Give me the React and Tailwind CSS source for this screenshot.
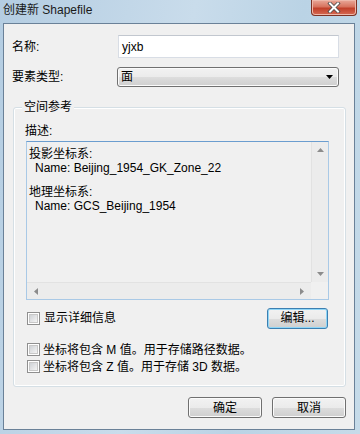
import React from 'react';

const FONT = '"Liberation Sans", "Noto Sans CJK SC", sans-serif';

function CheckBox() {
  return (
    <span className="w-[13px] h-[13px] border border-[#8f8f8f] bg-white p-[1px] flex shrink-0">
      <span className="flex-1 bg-gradient-to-br from-[#cfd2d6] to-[#f4f4f4] border border-[#c8c8c8]" />
    </span>
  );
}

function WinButton({ children, focused, className }) {
  return (
    <button
      className={
        'h-[21px] rounded-[3px] border text-[12px] text-black flex items-center justify-center bg-[linear-gradient(#f2f2f2_0%,#ebebeb_50%,#dddddd_51%,#cfcfcf_100%)] ' +
        (focused
          ? 'border-[#3c7fb1] shadow-[inset_0_0_0_1px_#8fd6f7] '
          : 'border-[#707070] shadow-[inset_0_0_0_1px_#fbfbfb] ') +
        (className || '')
      }
    >
      {children}
    </button>
  );
}

function Tri({ dir }) {
  const pts = {
    up: '0,4 7,4 3.5,0',
    down: '0,0 7,0 3.5,4',
    left: '4,0 4,7 0,3.5',
    right: '0,0 0,7 4,3.5',
  }[dir];
  const w = dir === 'up' || dir === 'down' ? 7 : 4;
  const h = dir === 'up' || dir === 'down' ? 4 : 7;
  return (
    <svg width={w} height={h} viewBox={`0 0 ${w} ${h}`}>
      <polygon points={pts} fill="#8c8c8c" />
    </svg>
  );
}

export default function App() {
  return (
    <div
      className="w-[360px] h-[434px] flex flex-col bg-[linear-gradient(100deg,#b4cde2_0%,#c9dceb_45%,#bad3e5_70%,#c6dbe9_100%)] overflow-hidden"
      style={{ fontFamily: FONT }}
    >
      {/* title bar */}
      <div className="h-[23px] flex items-start shrink-0">
        <span className="pl-[3px] pt-[2px] text-[12px] leading-[16px] text-[#1a1a1a]">创建新 Shapefile</span>
        <div className="ml-auto mr-[3px] w-[46px] h-[16px] rounded-b-[4px] border border-t-0 border-[#7d3224] bg-[linear-gradient(#e9a99a_0%,#d7735e_45%,#c1402a_55%,#d66a53_100%)] shadow-[inset_0_0_0_1px_#eeb8aa] flex items-center justify-center">
          <svg width="14" height="11" viewBox="0 0 14 11">
            <path d="M3 1.5 L11 9.5 M11 1.5 L3 9.5" stroke="#4a4a4a" strokeWidth="3.6" strokeLinecap="square" />
            <path d="M3 1.5 L11 9.5 M11 1.5 L3 9.5" stroke="#ffffff" strokeWidth="2" strokeLinecap="square" />
          </svg>
        </div>
      </div>

      {/* client area */}
      <div className="ml-[3px] mr-[5px] mb-[4px] flex-1 border border-[#6a8198] bg-[#f0f0f0] flex flex-col text-[12px] text-black">
        <div className="flex items-center mt-[11px]">
          <span className="w-[114px] pl-[8px]">名称:</span>
          <div className="w-[221px] h-[23px] bg-white border border-[#d8dde5] border-t-[#c2c7cf] flex items-center pl-[3px]">
            yjxb
          </div>
        </div>
        <div className="flex items-center mt-[9px]">
          <span className="w-[113px] pl-[8px]">要素类型:</span>
          <div className="w-[222px] h-[20px] rounded-[3px] border border-[#707070] bg-[linear-gradient(#f2f2f2_0%,#ebebeb_50%,#dddddd_51%,#cfcfcf_100%)] shadow-[inset_0_0_0_1px_#fbfbfb] flex items-center pl-[3px] pr-[5px]">
            <span>面</span>
            <svg className="ml-auto" width="7" height="4" viewBox="0 0 7 4">
              <polygon points="0,0 7,0 3.5,4" fill="#000" />
            </svg>
          </div>
        </div>

        {/* group box */}
        <div className="relative ml-[9px] mt-[20px] w-[333px] h-[280px] rounded-[3px] border border-[#d5dfe5] shadow-[inset_0_0_0_1px_#ffffff] flex flex-col">
          <span className="absolute left-[8px] -top-[8px] px-[2px] bg-[#f0f0f0] leading-[14px]">空间参考</span>
          <div className="pl-[11px] mt-[16px] leading-[14px]">描述:</div>
          <div className="ml-[12px] mt-[3px] w-[303px] h-[159px] border border-[#a9c9e6] border-t-[#6b9dcf] bg-[#f0f0f0] flex flex-col">
            <div className="flex flex-1 min-h-0">
              <div className="flex-1 pl-[2px] pt-[5px] leading-[14px]">
                <div>投影坐标系:</div>
                <div className="pl-[6px]">Name: Beijing_1954_GK_Zone_22</div>
                <div className="h-[10px]" />
                <div>地理坐标系:</div>
                <div className="pl-[6px]">Name: GCS_Beijing_1954</div>
              </div>
              <div className="w-[17px] bg-[#ececec] border-l border-[#e2e2e2] flex flex-col items-center justify-between py-[6px]">
                <Tri dir="up" />
                <Tri dir="down" />
              </div>
            </div>
            <div className="h-[17px] flex">
              <div className="flex-1 bg-[#ececec] border-t border-[#e2e2e2] flex items-center justify-between px-[7px]">
                <Tri dir="left" />
                <Tri dir="right" />
              </div>
              <div className="w-[17px] bg-[#f0f0f0]" />
            </div>
          </div>
          <div className="ml-[12px] mt-[8px] w-[303px] h-[20px] flex items-center">
            <span className="ml-[1px]">
              <CheckBox />
            </span>
            <span className="ml-[4px]">显示详细信息</span>
            <WinButton focused className="ml-auto mr-[1px] w-[61px] h-[20px]">
              编辑...
            </WinButton>
          </div>
          <div className="ml-[13px] mt-[13px] flex flex-col">
            <div className="h-[17px] flex items-center">
              <CheckBox />
              <span className="ml-[3px]">坐标将包含 M 值。用于存储路径数据。</span>
            </div>
            <div className="h-[17px] flex items-center">
              <CheckBox />
              <span className="ml-[3px]">坐标将包含 Z 值。用于存储 3D 数据。</span>
            </div>
          </div>
        </div>

        <div className="flex justify-end gap-[10px] mt-[10px] mr-[8px]">
          <WinButton className="w-[74px]">确定</WinButton>
          <WinButton className="w-[74px]">取消</WinButton>
        </div>
      </div>
    </div>
  );
}
